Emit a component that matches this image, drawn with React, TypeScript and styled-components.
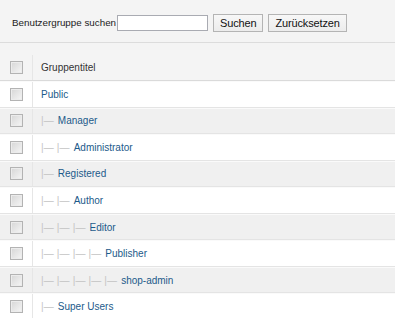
import React from "react";
import styled, { createGlobalStyle } from "styled-components";

const GlobalStyle = createGlobalStyle`
  html, body {
    margin: 0;
    padding: 0;
    background: #ffffff;
  }
  body {
    font-family: "Liberation Sans", Arial, sans-serif;
  }
`;

const linkColor = "#1c5a8a";
const rowLine = "#e4e4e4";

const Page = styled.div`
  width: 395px;
  height: 318px;
  overflow: hidden;
  background: #ffffff;
`;

const Toolbar = styled.div`
  display: flex;
  align-items: center;
  height: 43px;
  padding: 3px 0 0 12px;
  box-sizing: border-box;
  background: #f4f4f4;
  border-bottom: 1px solid #dcdcdc;
`;

const SearchLabel = styled.label`
  font-size: 9.8px;
  color: #222;
  margin-right: 1px;
`;

const SearchInput = styled.input`
  width: 91px;
  height: 16px;
  box-sizing: border-box;
  border: 1px solid #a9abb2;
  background: #fff;
  padding: 0 2px;
  margin: 0;
  font-size: 10px;
`;

const Button = styled.button`
  height: 18px;
  box-sizing: border-box;
  margin: 0 0 0 5px;
  padding: 0 6px;
  border: 1px solid #b4b4b4;
  background: linear-gradient(#f7f7f7, #ececec);
  font-family: "Liberation Sans", Arial, sans-serif;
  font-size: 11px;
  letter-spacing: -0.15px;
  color: #111;
  line-height: 16px;
`;

const Table = styled.div`
  display: flex;
  flex-direction: column;
`;

const Row = styled.div<{ $head?: boolean; $alt?: boolean }>`
  display: grid;
  grid-template-columns: 33px 1fr;
  height: ${(p) => (p.$head ? "38px" : "26.55px")};
  padding-top: ${(p) => (p.$head ? "12px" : "1px")};
  box-sizing: border-box;
  background: ${(p) => (p.$head ? "#f4f4f4" : p.$alt ? "#f0f0f0" : "#ffffff")};
  border-bottom: 1px solid ${(p) => (p.$head ? "#dadada" : rowLine)};
  box-shadow: inset 0 1px 0 ${(p) => (p.$head ? "#f4f4f4" : "#fafafa")};
`;

const CheckCell = styled.div`
  display: flex;
  align-items: center;
  justify-content: center;
  border-right: 1px solid #e6e6e6;
`;

const Check = styled.span`
  display: block;
  width: 13px;
  height: 13px;
  box-sizing: border-box;
  border: 1px solid #b3b3b3;
  background: linear-gradient(135deg, #d6d6d6, #f6f6f6);
  box-shadow: inset 0 0 0 1px #ececec;
`;

const TitleCell = styled.div`
  display: flex;
  align-items: center;
  padding-left: 8px;
  font-size: 10px;
  white-space: pre;
`;

const HeadText = styled.span`
  color: #333;
`;

const Indent = styled.span`
  color: #c4c4c4;
  letter-spacing: 0.15px;
  margin-right: 1px;
`;

const GroupLink = styled.a`
  color: ${linkColor};
  text-decoration: none;
  &:visited {
    color: ${linkColor};
  }
`;

type Group = { title: string; level: number };

const groups: Group[] = [
  { title: "Public", level: 0 },
  { title: "Manager", level: 1 },
  { title: "Administrator", level: 2 },
  { title: "Registered", level: 1 },
  { title: "Author", level: 2 },
  { title: "Editor", level: 3 },
  { title: "Publisher", level: 4 },
  { title: "shop-admin", level: 5 },
  { title: "Super Users", level: 1 },
];

const App: React.FC = () => {
  return (
    <Page>
      <GlobalStyle />
      <Toolbar>
        <SearchLabel htmlFor="search">Benutzergruppe suchen</SearchLabel>
        <SearchInput id="search" type="text" />
        <Button>Suchen</Button>
        <Button>Zurücksetzen</Button>
      </Toolbar>
      <Table>
        <Row $head>
          <CheckCell>
            <Check />
          </CheckCell>
          <TitleCell>
            <HeadText>Gruppentitel</HeadText>
          </TitleCell>
        </Row>
        {groups.map((g, i) => (
          <Row key={g.title} $alt={i % 2 === 1}>
            <CheckCell>
              <Check />
            </CheckCell>
            <TitleCell>
              {g.level > 0 && <Indent>{"|— ".repeat(g.level)}</Indent>}
              <GroupLink href="#">{g.title}</GroupLink>
            </TitleCell>
          </Row>
        ))}
      </Table>
    </Page>
  );
};

export default App;
